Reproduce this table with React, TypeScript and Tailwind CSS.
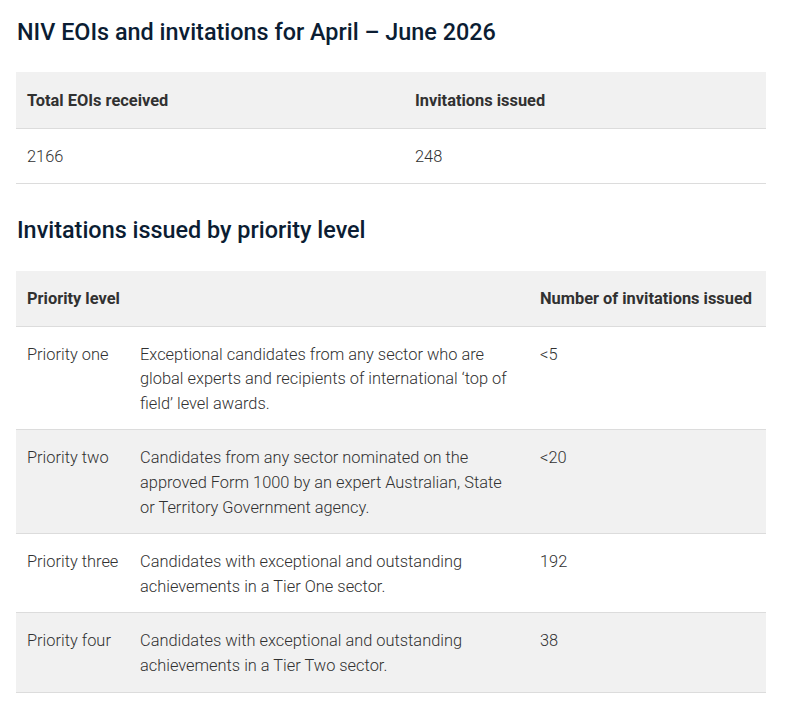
const rows = [
  {
    level: 'Priority one',
    desc: 'Exceptional candidates from any sector who are global experts and recipients of international \u2018top of field\u2019 level awards.',
    count: '<5',
  },
  {
    level: 'Priority two',
    desc: 'Candidates from any sector nominated on the approved Form 1000 by an expert Australian, State or Territory Government agency.',
    count: '<20',
  },
  {
    level: 'Priority three',
    desc: 'Candidates with exceptional and outstanding achievements in a Tier One sector.',
    count: '192',
  },
  {
    level: 'Priority four',
    desc: 'Candidates with exceptional and outstanding achievements in a Tier Two sector.',
    count: '38',
  },
];

export default function App() {
  return (
    <div className="min-h-[718px] bg-white px-4 pt-4 font-['Roboto',sans-serif] text-[#313131]">
      {/* Totals */}
      <h2 className="text-[23.4px] leading-8 font-medium text-[#0b1d33] pl-px">
        NIV EOIs and invitations for April &ndash; June 2026
      </h2>
      <table className="mt-6 w-[750px] table-fixed border-collapse text-left text-[16.4px] leading-[1.5]">
        <colgroup>
          <col className="w-[388px]" />
          <col />
        </colgroup>
        <thead>
          <tr className="bg-[#f1f1f1] border-b border-[#dcdcdc]">
            <th className="h-[56px] px-[11px] pt-[3px] font-bold">Total EOIs received</th>
            <th className="h-[56px] px-[11px] pt-[3px] font-bold">Invitations issued</th>
          </tr>
        </thead>
        <tbody>
          <tr className="border-b border-[#dcdcdc] font-light">
            <td className="pt-[16px] pb-[14px] px-[11px]">2166</td>
            <td className="pt-[16px] pb-[14px] px-[11px]">248</td>
          </tr>
        </tbody>
      </table>

      {/* Priority breakdown */}
      <h2 className="mt-[30px] text-[23.4px] leading-8 font-medium text-[#0b1d33] pl-px">
        Invitations issued by priority level
      </h2>
      <table className="mt-[25px] w-[750px] table-fixed border-collapse text-left text-[16.4px] leading-[1.5]">
        <colgroup>
          <col className="w-[113px]" />
          <col className="w-[400px]" />
          <col />
        </colgroup>
        <thead>
          <tr className="bg-[#f1f1f1] border-b border-[#dcdcdc]">
            <th className="h-[55px] px-[11px] pt-[2px] font-bold whitespace-nowrap">Priority level</th>
            <th className="h-[55px] px-[11px] pt-[2px]"></th>
            <th className="h-[55px] px-[11px] pt-[2px] font-bold whitespace-nowrap">Number of invitations issued</th>
          </tr>
        </thead>
        <tbody className="font-light">
          {rows.map((r, i) => (
            <tr
              key={r.level}
              className={i % 2 === 1 ? 'bg-[#f1f1f1] border-b border-[#dcdcdc]' : 'border-b border-[#dcdcdc]'}
            >
              <td className="align-top pt-[16px] pb-[13px] px-[11px] whitespace-nowrap">{r.level}</td>
              <td className="align-top pt-[16px] pb-[13px] pl-[11px] pr-[17px]">{r.desc}</td>
              <td className="align-top pt-[16px] pb-[13px] px-[11px]">{r.count}</td>
            </tr>
          ))}
        </tbody>
      </table>
    </div>
  );
}
